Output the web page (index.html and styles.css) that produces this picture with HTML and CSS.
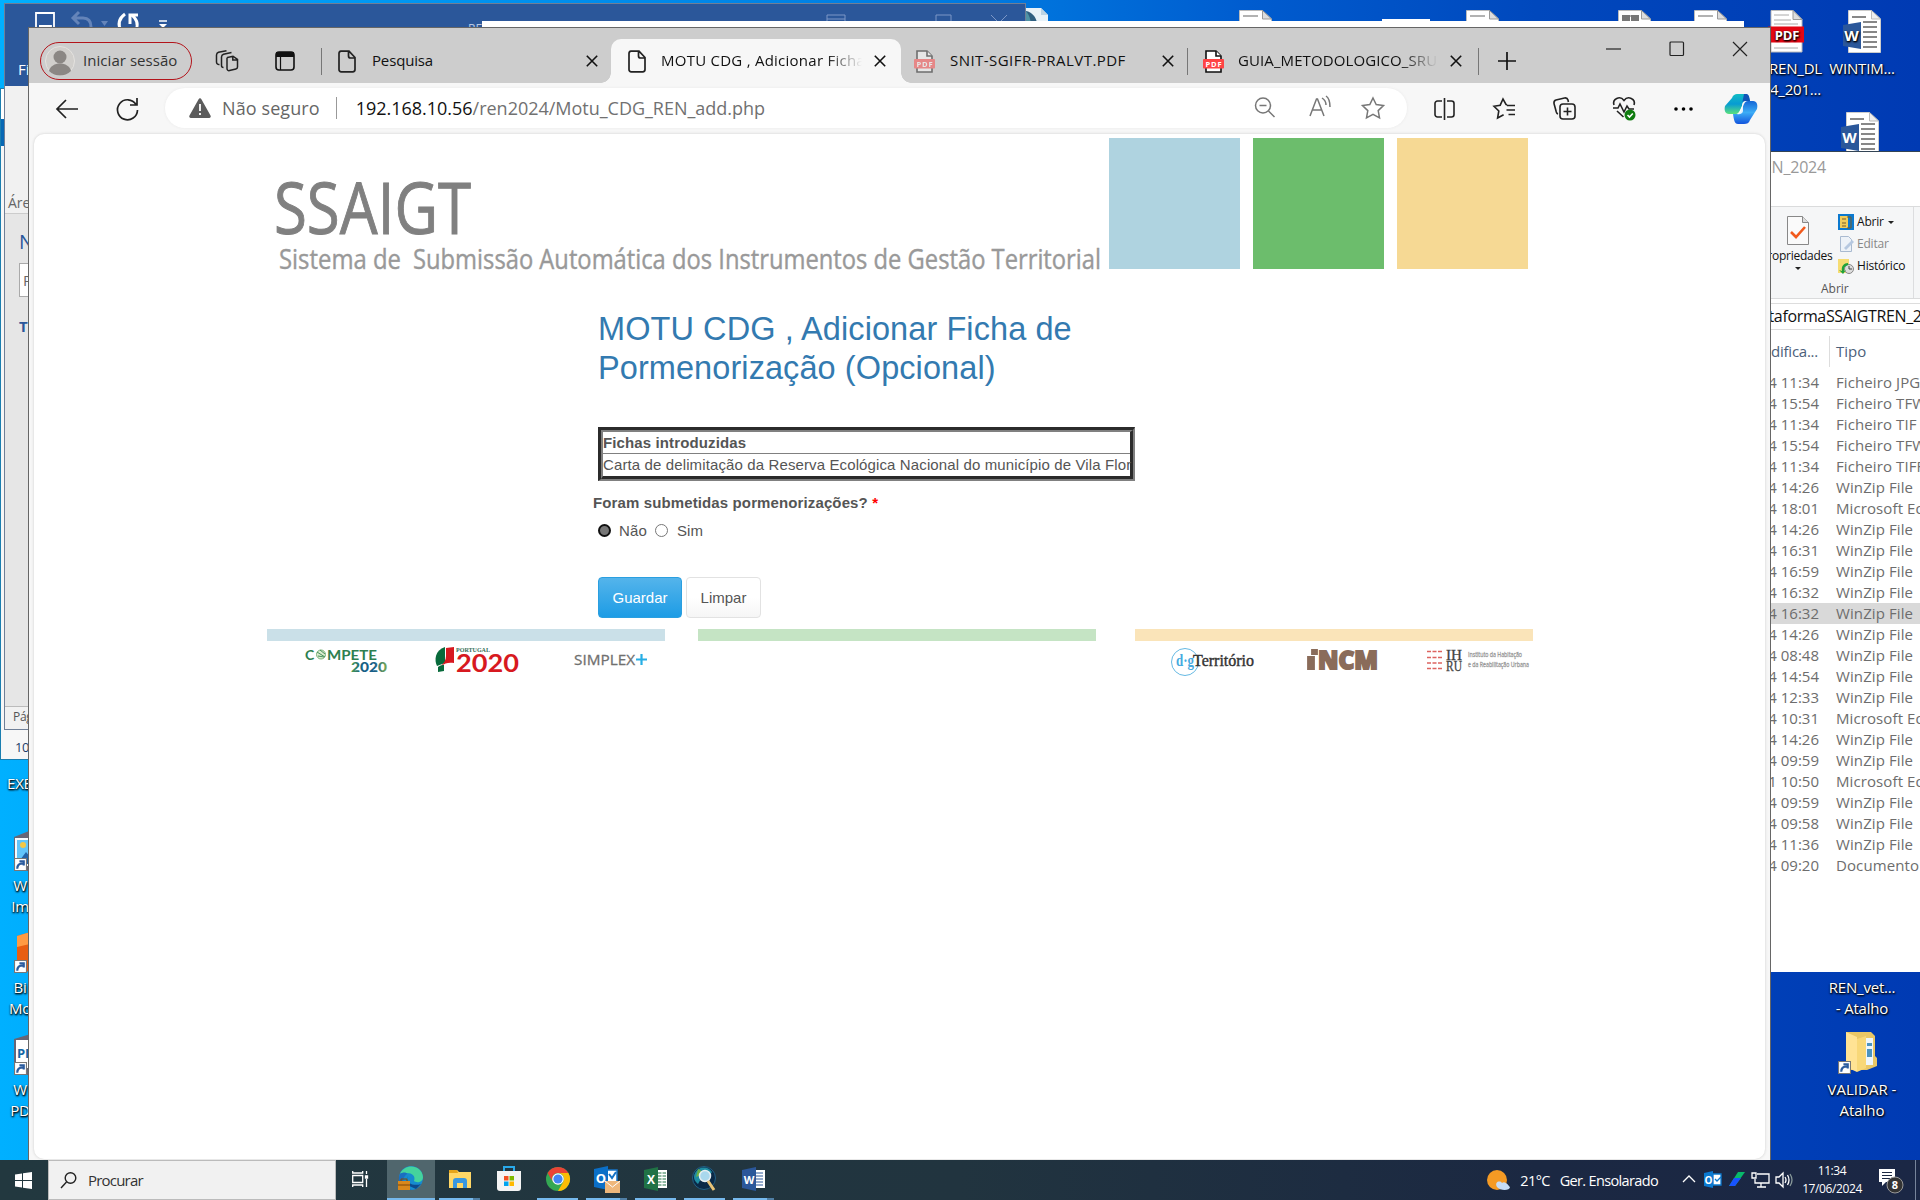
FILE: index.html
```html
<!DOCTYPE html>
<html lang="pt">
<head>
<meta charset="utf-8">
<title>MOTU CDG , Adicionar Ficha de Pormenorização (Opcional)</title>
<link rel="stylesheet" href="styles.css">
</head>
<body>
<svg class="defs" width="0" height="0">
  <defs>
    <symbol id="page" viewBox="0 0 18 23"><path d="M3 1.200h8l6 6.300V19.500a2.300 2.300 0 0 1-2.300 2.300H3.200A2.200 2.200 0 0 1 1 19.500V3.500A2.300 2.300 0 0 1 3 1.200zM10.500 1.500v4.500a2 2 0 0 0 2 2H17" fill="none" stroke="#222" stroke-width="1.700"/></symbol>
    <symbol id="cross" viewBox="0 0 12 12"><path d="M.8.8l10.400 10.400M11.200.8L.8 11.200" stroke="#111" stroke-width="1.600" fill="none"/></symbol>
    <symbol id="pdf" viewBox="0 0 21 23"><path d="M3 1h10l5 5v16H3z" fill="#fff" stroke="#111" stroke-width="1.600"/><path d="M13 1v5h5" fill="#fff" stroke="#111" stroke-width="1.600"/><rect y="9" width="21" height="9.500" rx="1" fill="#f44"/><text x="10.500" y="16.500" font-size="7.500" font-weight="700" text-anchor="middle" textLength="16" fill="#fff">PDF</text></symbol>
    <symbol id="doc" viewBox="0 0 33 43"><path d="M.5.500h23L32.500 9v33.500H.5z" fill="#fff" stroke="#bbb"/><path d="M23.500.500V9h9z" fill="#ddd" stroke="#999"/><path d="M4 6h15M4 12h18" stroke="#999" stroke-width="1.500"/></symbol>
    <symbol id="word" viewBox="0 0 38 43"><path d="M5.500.500h23L37.500 9v33.500h-32z" fill="#fff" stroke="#ccc"/><path d="M28.500.500V9h9z" fill="#eee" stroke="#bbb"/><path d="M9 7h14M20 12h14M20 17h14M20 22h14M20 27h14M20 32h14M20 37h14" stroke="#888" stroke-width="1.800"/><path d="M0 15l18-3v27L0 36z" fill="#2b579a"/><text x="8.500" y="31" font-size="15" font-weight="700" text-anchor="middle" fill="#fff">W</text></symbol>
    <symbol id="arrow" viewBox="0 0 12 12"><path d="M.5.500h11v11H.5z" fill="#fff" stroke="#777"/><path d="M3 10c0-4 2-5 5-5M5 3h4v4" stroke="#2b5c9f" stroke-width="2" fill="none"/></symbol>
  </defs>
</svg>

<main class="desktop">
  <svg class="pin globe" width="25" height="22" viewBox="0 0 25 22"><path d="M0 1h17l7 7v14H0z" fill="#e8f2f8"/><path d="M2 4c6 1 10 6 11 12v6H2z" fill="#2f5f80"/><path d="M2 4v18h4c2-6 0-13-4-18z" fill="#4f93a5"/><path d="M17 1v7h7z" fill="#bcd4e4"/></svg>
  <svg class="pin d1" width="33" height="43"><use href="#doc"/></svg>
  <i class="pin sliver"></i>
  <svg class="pin d2" width="33" height="43"><use href="#doc"/></svg>
  <svg class="pin d3" width="33" height="43"><use href="#doc"/><path d="M4 5h8v8H4zM13 5h8v8h-8z" fill="#777"/></svg>
  <svg class="pin d4" width="33" height="43"><use href="#doc"/></svg>

  <div class="pin shortcut ren-dl">
    <svg width="38" height="45" viewBox="0 0 38 45"><path d="M3 .5h22l9 9V42H3z" fill="#fff" stroke="#bbb"/><path d="M25 .5V9.500h9z" fill="#ddd" stroke="#999"/><path d="M6 5h15M6 10h17M6 14h24M6 38h24" stroke="#aaa"/><rect y="16.500" width="36" height="16" fill="#e30613"/><text x="19" y="29.500" font-size="13" font-weight="700" text-anchor="middle" fill="#fff">PDF</text></svg>
    <span>REN_DL<br>4_201...</span>
  </div>
  <div class="pin shortcut wintim"><svg width="38" height="43"><use href="#word"/></svg><span>WINTIM...</span></div>
  <svg class="pin word2" width="38" height="43"><use href="#word"/></svg>
  <div class="pin shortcut vet"><span>REN_vet...<br>- Atalho</span></div>
  <div class="pin shortcut validar">
    <svg width="40" height="44" viewBox="0 0 40 44"><path d="M8 1h25l4 4v20l2 2v8l-10 4H8z" fill="#e9c766"/><path d="M28 7h7v27h-7z" fill="#eef6fb"/><path d="M29 12h5v3h-5zM29 18h5v8h-5z" fill="#4b94bf"/><path d="M8 1l11 5v35L8 36z" fill="#ffe394"/><path d="M19 8l9-3v32l-9 4z" fill="#f8d878"/><use href="#arrow" x="0" y="30" width="13" height="13"/></svg>
    <span>VALIDAR -<br>Atalho</span>
  </div>

  <div class="pin shortcut left-a"><svg width="40" height="42" viewBox="0 0 40 42"><path d="M0 8L20 0l20 8v34H0z" fill="#667"/><path d="M1 9h40v28H1z" fill="#f6fbff"/><path d="M3 11h40v24H3z" fill="#62c5fa"/><circle cx="9" cy="16" r="3" fill="#f5c745"/><path d="M3 35l9-12 5 6 8-11v17z" fill="#2464a9"/><use href="#arrow" y="29" width="13" height="13"/></svg><span>W<br>Im</span></div>
  <div class="pin shortcut left-b"><svg width="40" height="42" viewBox="0 0 40 42"><path d="M3 5L20 0v42L3 38z" fill="#e75e12"/><path d="M3 5l17-5v12L3 16z" fill="#ff9b43"/><use href="#arrow" y="29" width="13" height="13"/></svg><span>Bi<br>Mo</span></div>
  <div class="pin shortcut left-c"><svg width="40" height="42" viewBox="0 0 40 42"><path d="M0 6L20 0v42H0z" fill="#667"/><path d="M2 7h38v28H2z" fill="#fff"/><text class="flat" x="3" y="25" font-size="13" font-weight="700" fill="#1566a5">PDF</text><use href="#arrow" y="29" width="13" height="13"/></svg><span>W<br>PD</span></div>
  <div class="pin shortcut left-e"><span>EXE</span></div>

  <section class="back-window"><span>105</span></section>

  <section class="office">
    <header class="office-title">
      <svg width="1018" height="24" viewBox="0 0 1018 24" fill="none">
        <path d="M31 9h18v17H31zM34 22h12v5" stroke="#fff" stroke-width="1.800"/>
        <path d="M74 8l-6 6 6 6M69 14h9c7 0 8 5 8 9" stroke="#6484b9" stroke-width="3"/><path d="M96 17h7l-3.500 5z" fill="#6484b9"/>
        <path d="M120 10c-7 5-7 11-4 17M131 26c3-7 0-11-4-15M125 20v-9h8" stroke="#fff" stroke-width="3"/>
        <path d="M154 17h8" stroke="#fff" stroke-width="1.500"/><path d="M154 20h8l-4 4z" fill="#fff"/>
        <path d="M822 11h18v12h-18zM822 15h18M931 11h15v14h-15M986 11l8 8 8-8M931 11v14" stroke="#7c97c6"/>
        <text x="463" y="29" font-size="12" fill="#b9c8e2">RE</text>
      </svg>
    </header>
    <div class="office-menu">Ficheiro</div>
    <div class="office-ribbon">Área</div>
    <div class="office-pane"><b class="nav">Nave</b><span class="find">Proc</span><b class="nav-tab">Títulos</b></div>
    <footer class="office-status">Página</footer>
  </section>

  <i class="pin white-window"></i>

  <section class="explorer">
    <div class="ex-title"><span>REN_2024</span></div>
    <div class="ex-ribbon">
      <div class="ex-props">
        <svg width="22" height="29" viewBox="0 0 22 29"><path d="M.5.500h15l6 6v22H.5z" fill="#fafafa" stroke="#888"/><path d="M15.500.500v6h6" fill="#ddd" stroke="#888"/><path d="M4 16l5 5 9-10" stroke="#f25a1d" stroke-width="2.600" fill="none"/></svg>
        <span>Propriedades</span><i class="caret"></i>
      </div>
      <div class="ex-actions">
        <div><svg width="16" height="16" viewBox="0 0 16 16"><path d="M0 0h16v16H0z" fill="#0b79cf"/><path d="M2 2h8v12H2z" fill="#f2cc59"/><path d="M4 5h4M4 9h4M4 12h4M9 3h4v11H9" stroke="#775c2b" fill="none"/></svg>Abrir<i class="caret"></i></div>
        <div class="dim"><svg width="16" height="16" viewBox="0 0 16 16"><path d="M2.500.500h8l3 3v12h-11z" fill="#edf2f8" stroke="#a9bad0"/><path d="M6 12l8-8 2 2-8 8z" fill="#b6c8e0"/></svg>Editar</div>
        <div><svg width="16" height="16" viewBox="0 0 16 16"><path d="M0 1h11v14H0z" fill="#f6dc72"/><circle cx="11" cy="11" r="4.500" fill="#ddd" stroke="#888"/><path d="M11 8v3h3" stroke="#444" fill="none"/><path d="M10 5c-4 0-7 3-6 8l-3-1 4 4 3-4-2 1c0-4 1-5 4-6z" fill="#21a339"/></svg>Histórico</div>
      </div>
      <div class="ex-group">Abrir</div>
    </div>
    <div class="ex-address"><span>PlataformaSSAIGTREN_2024</span></div>
    <div class="ex-head"><span class="when">Data de modifica...</span><span class="kind">Tipo</span></div>
    <div class="ex-rows">
      <div><span>4 11:34</span><span>Ficheiro JPG</span></div>
      <div><span>4 15:54</span><span>Ficheiro TFW</span></div>
      <div><span>4 11:34</span><span>Ficheiro TIF</span></div>
      <div><span>4 15:54</span><span>Ficheiro TFW</span></div>
      <div><span>4 11:34</span><span>Ficheiro TIFF</span></div>
      <div><span>4 14:26</span><span>WinZip File</span></div>
      <div><span>4 18:01</span><span>Microsoft Edge</span></div>
      <div><span>4 14:26</span><span>WinZip File</span></div>
      <div><span>4 16:31</span><span>WinZip File</span></div>
      <div><span>4 16:59</span><span>WinZip File</span></div>
      <div><span>4 16:32</span><span>WinZip File</span></div>
      <div class="picked"><span>4 16:32</span><span>WinZip File</span></div>
      <div><span>4 14:26</span><span>WinZip File</span></div>
      <div><span>4 08:48</span><span>WinZip File</span></div>
      <div><span>4 14:54</span><span>WinZip File</span></div>
      <div><span>4 12:33</span><span>WinZip File</span></div>
      <div><span>4 10:31</span><span>Microsoft Edge</span></div>
      <div><span>4 14:26</span><span>WinZip File</span></div>
      <div><span>4 09:59</span><span>WinZip File</span></div>
      <div><span>1 10:50</span><span>Microsoft Edge</span></div>
      <div><span>4 09:59</span><span>WinZip File</span></div>
      <div><span>4 09:58</span><span>WinZip File</span></div>
      <div><span>4 11:36</span><span>WinZip File</span></div>
      <div><span>4 09:20</span><span>Documento</span></div>
    </div>
  </section>

  <section class="browser">
    <header class="tabstrip">
      <div class="account"><svg width="30" height="30" viewBox="0 0 30 30"><circle cx="15" cy="15" r="14.500" fill="#d1cfcc" stroke="#e4e2df"/><circle cx="15" cy="11" r="6.500" fill="#8b8784"/><path d="M4 25c2-10 20-10 22 0-6 6-16 6-22 0z" fill="#8b8784"/></svg><span>Iniciar sessão</span></div>
      <svg class="workspaces" width="24" height="22" viewBox="0 0 24 22" fill="none" stroke="#222" stroke-width="1.500"><path d="M12.500 7.500l5.500-1.300 4.500 3.300v7.500a2 2 0 0 1-1.600 2l-6.400 1.600a2 2 0 0 1-2.500-2V9.500a2 2 0 0 1 .5-2zM17.800 6.500V10h4.500M8.500 17.500a2 2 0 0 1-2-2V7a3 3 0 0 1 2-2.700L16.500 2.500M4.500 14.500a2.500 2.500 0 0 1-3-2.500V5a3 3 0 0 1 2-2.700L11.500.800"/></svg>
      <svg class="vertical" width="20" height="20" viewBox="0 0 20 20" fill="none" stroke="#111"><rect x="1" y="1" width="18" height="18" rx="3" stroke-width="1.600"/><path d="M1 3.500h18" stroke-width="5"/><path d="M5.500 5v14" stroke-width="1.200"/></svg>
      <i class="rule r1"></i>
      <div class="tab t1"><svg width="18" height="23"><use href="#page"/></svg><span>Pesquisa</span><svg class="x" width="12" height="12"><use href="#cross"/></svg></div>
      <div class="tab t2"><svg width="18" height="23"><use href="#page"/></svg><span>MOTU CDG , Adicionar Ficha de</span><svg class="x" width="12" height="12"><use href="#cross"/></svg></div>
      <div class="tab t3"><svg class="faded" width="21" height="23"><use href="#pdf"/></svg><span>SNIT-SGIFR-PRALVT.PDF</span><svg class="x" width="12" height="12"><use href="#cross"/></svg></div>
      <i class="rule"></i>
      <div class="tab t4"><svg width="21" height="23"><use href="#pdf"/></svg><span>GUIA_METODOLOGICO_SRUP</span><svg class="x" width="12" height="12"><use href="#cross"/></svg></div>
      <i class="rule"></i>
      <svg class="plus" width="18" height="18" viewBox="0 0 18 18" stroke="#111" stroke-width="1.700"><path d="M9 0v18M0 9h18"/></svg>
      <svg class="controls" width="142" height="16" viewBox="0 0 142 16" fill="none" stroke="#222" stroke-width="1.200"><path d="M0 8h15"/><rect x="64" y="1" width="13.500" height="13.500" rx="1"/><path d="M127 1l14 14M141 1l-14 14"/></svg>
    </header>
    <nav class="toolbar">
      <svg class="back" width="22" height="20" viewBox="0 0 22 20" fill="none" stroke="#222" stroke-width="1.700"><path d="M22 10H1M10 1L1 10l9 9"/></svg>
      <svg class="reload" width="23" height="23" viewBox="0 0 23 23" fill="none" stroke="#222" stroke-width="1.700"><path d="M20 7.500A10 10 0 1 0 21.500 13M21 1v7h-7"/></svg>
      <div class="omnibox">
        <svg width="22" height="20" viewBox="0 0 22 20"><path d="M9.600 1.200a1.600 1.600 0 0 1 2.800 0L21.500 17.500A1.600 1.600 0 0 1 20 20H2A1.600 1.600 0 0 1 .5 17.500z" fill="#5c5c5c"/><path d="M11 6v7M11 15v2" stroke="#fff" stroke-width="1.800"/></svg>
        <span class="warn">Não seguro</span><i></i>
        <span class="url"><b>192.168.10.56</b>/ren2024/Motu_CDG_REN_add.php</span>
        <svg class="omni-icons" width="132" height="24" viewBox="0 0 132 24" fill="none" stroke="#777" stroke-width="1.500"><circle cx="9" cy="9.500" r="7.500"/><path d="M5.500 9.500h7M14.500 15l6 6"/><path d="M56 20l6.500-17h1L70 20M58 14h10M68 2c3 2 4 4 4 7M72 0c3 2 4 6 4 11"/><path d="M119 2l3.200 6.600 7.300 1-5.300 5 1.300 7.300-6.500-3.500-6.500 3.500 1.300-7.300-5.300-5 7.300-1z"/></svg>
      </div>
      <svg class="split" width="21" height="22" viewBox="0 0 21 22" fill="none" stroke="#222" stroke-width="1.600"><path d="M8 3H3.500A2.500 2.500 0 0 0 1 5.500v11A2.500 2.500 0 0 0 3.500 19H8M13 3h4.500A2.500 2.500 0 0 1 20 5.500v11a2.500 2.500 0 0 1-2.500 2.500H13M10.500 0v22"/></svg>
      <svg class="favs" width="23" height="22" viewBox="0 0 23 22" fill="none" stroke="#222" stroke-width="1.600"><path d="M14 7l-1-.5L10 1 7.200 7.200 1 8.200l4.800 4.800L4.600 20l6-3.300M14 7.500h8M13.500 12h8.500M15.500 16.500H22"/></svg>
      <svg class="coll" width="23" height="23" viewBox="0 0 23 23" fill="none" stroke="#222" stroke-width="1.600"><rect x="7" y="7" width="15" height="15" rx="3"/><path d="M14.500 10.500v8M10.500 14.500h8M5 17c-1-.3-1.400-1-1.700-2L1 6.500C.7 4.500 1.200 3.500 3 3l8.500-2c2-.4 3 .3 3.500 2l.4 2"/></svg>
      <svg class="heart" width="24" height="25" viewBox="0 0 24 25" fill="none" stroke="#222" stroke-width="1.600"><path d="M2 9C0 3 8-1 12 4.500 16-1 24 3 22 9M5 15l6.500 6M1 12h5l2-4 4 8 3-6 2 3h5"/><circle cx="18" cy="19" r="5.500" fill="#107c10" stroke="none"/><path d="M15.500 19l2 2 3.300-3.500" stroke="#fff"/></svg>
      <svg class="dots" width="19" height="4" viewBox="0 0 19 4"><circle cx="2" cy="2" r="1.800"/><circle cx="9.500" cy="2" r="1.800"/><circle cx="17" cy="2" r="1.800"/></svg>
      <svg class="copilot" width="34" height="30" viewBox="0 0 34 30"><defs><linearGradient id="ca" x2="0" y2="1"><stop stop-color="#12bdc4"/><stop offset=".5" stop-color="#079bd3"/><stop offset="1" stop-color="#5be17d"/></linearGradient><linearGradient id="cb" x2="0" y2="1"><stop stop-color="#1466d6"/><stop offset=".5" stop-color="#3dadf6"/><stop offset="1" stop-color="#1254dd"/></linearGradient></defs><path d="M8 4c1-3 3-4 5-4h8c3 0 4 2 5 7h-4c-3 0-4 2-4 5l-2 5c-1 2-2 3-4 3H5c-4 0-5-4-4-8z" fill="url(#ca)"/><path d="M20 0h2c3 0 3 2 4 7h-5c-2 0-3 1-3 3z" fill="#1255b7"/><path d="M26 26c-1 3-3 4-6 4h-6c-3 0-4-3-5-10h4c2 0 3-1 4-3l3-7c1-2 2-3 4-3h5c4 0 5 4 4 8z" fill="url(#cb)"/><path d="M15.500 17l3.500-7v7c0 2-3 4-6 3q1.500-1 2.500-3z" fill="#fff" opacity=".85"/></svg>
    </nav>

    <article class="page">
      <header class="banner">
        <svg class="brand" width="842" height="140" viewBox="0 0 842 140"><text x="7" y="99.500" font-size="72" textLength="197" lengthAdjust="spacingAndGlyphs" fill="#808080" stroke="#808080">SSAIGT</text><g fill="#999" stroke="#999" stroke-width=".4"><text x="12" y="135" font-size="27" textLength="122" lengthAdjust="spacingAndGlyphs">Sistema de</text><text x="146" y="135" font-size="27" textLength="688" lengthAdjust="spacingAndGlyphs">Submissão Automática dos Instrumentos de Gestão Territorial</text></g></svg>
        <i class="sq blue"></i><i class="sq green"></i><i class="sq yellow"></i>
      </header>
      <div class="form">
        <h1>MOTU CDG , Adicionar Ficha de Pormenorização (Opcional)</h1>
        <div class="sheet"><div class="sheet-in"><b>Fichas introduzidas</b><span>Carta de delimitação da Reserva Ecológica Nacional do município de Vila Flor</span></div></div>
        <div class="question">Foram submetidas pormenorizações? <em>*</em></div>
        <div class="choices"><i class="radio on"></i><span>Não</span><i class="radio"></i><span>Sim</span></div>
        <div class="buttons"><button class="primary">Guardar</button><button>Limpar</button></div>
      </div>
      <div class="bars"><i class="b1"></i><i class="b2"></i><i class="b3"></i></div>
      <footer class="partners">
        <svg width="1266" height="36" viewBox="0 0 1266 36">
          <g font-family="Lato" font-weight="700">
            <text x="38" y="18.500" font-size="14" fill="#2e8050" textLength="10">C</text><circle cx="54" cy="13.500" r="4.500" fill="#dceccf" stroke="#7eb27a"/><path d="M50 11l8 5M51 15l6 1M53 9l5 4" stroke="#46915c"/><text x="60" y="18.500" font-size="14" fill="#2e8050" textLength="50" lengthAdjust="spacingAndGlyphs">MPETE</text>
            <text x="84" y="31" font-size="14" font-weight="900" textLength="36" lengthAdjust="spacingAndGlyphs" fill="url(#yr)">2020</text>
          </g>
          <defs><linearGradient id="yr"><stop stop-color="#4c9c50"/><stop offset=".3" stop-color="#175f83"/><stop offset=".65" stop-color="#185e8a"/><stop offset="1" stop-color="#7aab50"/></linearGradient></defs>
          <path d="M178 6c-10 3-11 13-8 19l8-3z" fill="#086a3b"/><path d="M179 7l8-1v16c-5-1-9 0-13 3 3-3 5-6 5-10z" fill="#d71920"/><path d="M171 26c3-2 4-2 6-2v6l-6 1z" fill="#086a3b"/>
          <text x="189" y="10.500" font-family="Liberation Serif" font-weight="700" font-size="7" fill="#356e58" textLength="34" lengthAdjust="spacingAndGlyphs">PORTUGAL</text>
          <text x="189" y="31" font-family="Lato" font-weight="700" font-size="24" fill="#d71920" textLength="63" lengthAdjust="spacingAndGlyphs">2020</text>
          <text x="307" y="24" font-size="15" fill="#707070" stroke="#707070" stroke-width=".3" textLength="61" lengthAdjust="spacingAndGlyphs">SIMPLEX</text><path d="M369 18.500h11M374.500 13v11" stroke="#27aee5" stroke-width="2.200"/>
          <circle cx="918" cy="21" r="13.500" fill="none" stroke="#65b9e3"/><text x="909" y="25" font-family="Liberation Serif" font-weight="700" font-size="17" fill="#46aae0" textLength="18" lengthAdjust="spacingAndGlyphs">d·g</text><text x="926" y="25" font-family="Liberation Serif" font-size="16" fill="#333" stroke="#333" stroke-width=".4" textLength="61" lengthAdjust="spacingAndGlyphs">Território</text>
          <g fill="#8a6c5a" stroke="#8a6c5a" stroke-width="1.800"><path d="M1041 16h6v12h-6zM1045 9h5v4h-5z"/><text x="1051" y="27.500" font-weight="800" font-family="Open Sans" font-size="25" textLength="60" lengthAdjust="spacingAndGlyphs">NCM</text></g>
          <path d="M1160 10.500h16M1160 16.500h16M1160 22h16M1160 27.500h16" stroke="#dd6460" stroke-width="1.500" stroke-dasharray="4 1.500"/>
          <g font-family="Liberation Serif" font-size="15" fill="#444" stroke="#444" stroke-width=".3"><text x="1179" y="18.500" textLength="16" lengthAdjust="spacingAndGlyphs">IH</text><text x="1179" y="30" textLength="16" lengthAdjust="spacingAndGlyphs">RU</text></g>
          <g font-size="7" fill="#999" stroke="#999" stroke-width=".3"><text x="1201" y="16" textLength="54" lengthAdjust="spacingAndGlyphs">Instituto da Habitação</text><text x="1201" y="25.500" textLength="61" lengthAdjust="spacingAndGlyphs">e da Reabilitação Urbana</text></g>
        </svg>
      </footer>
    </article>
  </section>

  <footer class="taskbar">
    <div class="start"><svg width="17" height="17" viewBox="0 0 17 17" fill="#fff"><path d="M0 2.500l7-1V8H0zM8 1.300L17 0v8H8zM0 9h7v6.500l-7-1zM8 9h9v8l-9-1.300z"/></svg></div>
    <div class="search"><svg width="17" height="17" viewBox="0 0 17 17" fill="none" stroke="#222" stroke-width="1.400"><circle cx="10.500" cy="6" r="5.300"/><path d="M6.500 10L1 16"/></svg><span>Procurar</span></div>
    <div class="app view"><svg width="16" height="16" viewBox="0 0 16 16" fill="none" stroke="#fff" stroke-width="1.300"><path d="M.7 4.500h10v7H.7zM.7 0v2h10V0M.7 16v-2h10v2M14.500 0v3M14.500 8v8"/><path d="M13.500 5h2v2h-2z" fill="#fff"/></svg></div>
    <div class="app on active"><svg width="26" height="26" viewBox="0 0 26 26"><circle cx="13" cy="12" r="12" fill="#168bcf"/><path d="M2 8C6-3 24-2 25 11c0 6-7 6-9 4 2-5-2-8-7-8-4 0-6 0-7 1z" fill="#45d39d"/><path d="M9 8c-6 4-5 13 5 16-12 0-15-10-12-16 2-2 7-2 7 0z" fill="#1b6ec0"/><path d="M10 10c-3 9 8 10 13 8l-5 5-9-4z" fill="#0d4a8d"/><rect y="15" width="12" height="9" fill="#d9881b"/><path d="M3 15v-2h6v2M0 19h12" stroke="#7f4609" fill="none"/></svg></div>
    <div class="app on more"><svg width="22" height="20" viewBox="0 0 22 20"><path d="M0 1h8l2 2h12v16H0z" fill="#ffd766"/><path d="M0 1h8l1 3H0z" fill="#e5a51b"/><path d="M4 19v-7c0-2 1-3 3-3h8c2 0 3 1 3 3v7h-4v-5H8v5z" fill="#3997df"/></svg></div>
    <div class="app"><svg width="24" height="24" viewBox="0 0 24 24"><path d="M7 5V0h10v5" fill="none" stroke="#29a9ea" stroke-width="2"/><path d="M0 4h24v17q0 3-3 3H3q-3 0-3-3z" fill="#f4f4f4"/><path d="M7 9h4.500v4.500H7z" fill="#f25022"/><path d="M12.500 9H17v4.500h-4.500z" fill="#7fba00"/><path d="M7 14.500h4.500V19H7z" fill="#00a4ef"/><path d="M12.500 14.500H17V19h-4.500z" fill="#ffb900"/></svg></div>
    <div class="app on"><svg width="24" height="24" viewBox="0 0 24 24"><circle cx="12" cy="12" r="12" fill="#34a853"/><path d="M1.600 6A12 12 0 0 1 22.400 6H12a6 6 0 0 0-5.200 9z" fill="#ea4335"/><path d="M22.400 6A12 12 0 0 1 12 24l5.200-9A6 6 0 0 0 12 6z" fill="#fbbc05"/><circle cx="12" cy="12" r="5.800" fill="#fff"/><circle cx="12" cy="12" r="4.600" fill="#4285f4"/></svg></div>
    <div class="app on more"><svg width="26" height="26" viewBox="0 0 26 26"><path d="M12 4h11v14H12z" fill="#fff" stroke="#1673c6" stroke-width="1.500"/><path d="M15 8l3 4 4-6" stroke="#1673c6" stroke-width="2" fill="none"/><path d="M0 3l14-3v24L0 21z" fill="#0b6fc7"/><text x="7" y="17" font-size="13" font-weight="700" fill="#fff" text-anchor="middle">O</text><path d="M11 15h15v12H11z" fill="#eeb77b"/><path d="M11 15l7.500 6 7.500-6" stroke="#fff" fill="none"/></svg></div>
    <div class="app on"><svg width="24" height="24" viewBox="0 0 24 24"><path d="M12 3h11v18H12z" fill="#fff"/><path d="M14 6h8M14 9h8M14 12h8M14 15h8M14 18h8" stroke="#217346"/><path d="M18 4v15" stroke="#fff"/><path d="M0 3l14-3v24L0 21z" fill="#207245"/><text x="7" y="16.500" font-size="12" font-weight="700" fill="#fff" text-anchor="middle">X</text></svg></div>
    <div class="app on"><svg width="26" height="26" viewBox="0 0 26 26"><circle cx="12" cy="12" r="11.500" fill="#0a2947" stroke="#245f83"/><path d="M3 7c4-7 13-7 17-1l-4 6-6-1-4 7c-4-3-5-7-3-11z" fill="#1f8da3"/><path d="M6 3c3 1 5 3 3 6l-5 2z" fill="#6aae48"/><circle cx="13" cy="10" r="5.500" fill="#a9d8ed" stroke="#e6eef1" stroke-width="1.500"/><path d="M16 15l6 9" stroke="#e9c376" stroke-width="3"/></svg></div>
    <div class="app on more"><svg width="24" height="24" viewBox="0 0 24 24"><path d="M12 3h11v18H12z" fill="#fff"/><path d="M14 6h7M14 9h7M14 12h7M14 15h7M14 18h7" stroke="#2b579a"/><path d="M0 3l14-3v24L0 21z" fill="#2b579a"/><text x="7" y="16.500" font-size="11" font-weight="700" fill="#fff" text-anchor="middle">W</text></svg></div>
    <div class="weather"><svg width="23" height="21" viewBox="0 0 23 21"><circle cx="10" cy="10" r="10" fill="#f49a24"/><path d="M10 17c-3-5 3-7 5-4 3-3 7 3 8 4 0 4-10 4-13 0z" fill="#c5dcf7"/></svg><span>21°C</span><span class="sky">Ger. Ensolarado</span></div>
    <svg class="tray" width="112" height="20" viewBox="0 0 112 20" fill="none" stroke="#fff" stroke-width="1.300"><path d="M1 12l6-6 6 6"/><path d="M31 4h8v11h-8z" fill="#fff" stroke="#0b79d0"/><path d="M33 9l2 2 4-4" stroke="#0b79d0"/><path d="M22 3l9-2v17l-9-2z" fill="#0b79d0" stroke="none"/><text x="26.500" y="13.500" font-size="10" font-weight="700" text-anchor="middle" fill="#fff" stroke="none">O</text><path d="M56 2h7L53 16h-6z" fill="#08b86b" stroke="none"/><path d="M52 8h7l-6 8h-6z" fill="#1853ff" stroke="none"/><path d="M75 4h12v9H73V9M79 13v4M75 17h9M70 3h4v5h-4z"/><path d="M94 7h3l4-4v14l-4-4h-3zM103 7q2 3 0 6M105.500 5q3 5 0 10"/><path d="M108 4q4 6 0 12" stroke="#899"/></svg>
    <div class="clock"><span>11:34</span><span>17/06/2024</span></div>
    <svg class="notice" width="26" height="26" viewBox="0 0 26 26"><path d="M0 0h16v13H7l-4 4v-4H0z" fill="#fff"/><path d="M3 3.500h10M3 6.500h10M3 9.500h8" stroke="#1b2842"/><circle cx="16" cy="16" r="8" fill="#333" stroke="#999"/><text x="16" y="20" font-size="11" font-weight="700" text-anchor="middle" fill="#fff">8</text></svg>
    <i class="peek"></i>
  </footer>
</main>
</body>
</html>
```
FILE: styles.css
```css
* { box-sizing: border-box; }
body { margin: 0; font: 15px "Open Sans", "Noto Sans", sans-serif; color: #111; overflow: hidden; }
svg { display: block; flex: none; overflow: visible; }
.defs { position: absolute; }
.desktop { position: relative; width: 1920px; height: 1200px; overflow: hidden; background: linear-gradient(90deg, #00b0ff 0, #009cf5 15%, #0078df 52%, #005ccf 65%, #0048bd 80%, #003ab3 100%); }
.pin { position: absolute; }
.globe { left: 1024px; top: 7px; }
.d1 { left: 1239px; top: 10px; }
.d2 { left: 1466px; top: 10px; }
.d3 { left: 1618px; top: 10px; }
.d4 { left: 1694px; top: 10px; }
.sliver { left: 1382px; top: 19px; width: 48px; height: 2px; background: #fff; }
.word2 { left: 1841px; top: 112px; }
.white-window { left: 482px; top: 21px; width: 1262px; height: 10px; background: #fff; }
.shortcut { display: flex; flex-direction: column; align-items: center; text-align: center; color: #fff; font-size: 15px; line-height: 21px; letter-spacing: -.2px; white-space: nowrap; text-shadow: 1px 1px 2px #000, 0 1px 2px #000; }
.flat { text-shadow: none; }
.ren-dl { left: 1749px; top: 10px; width: 93px; }
.ren-dl svg { margin-right: 17px; }
.ren-dl span { margin-top: 3px; }
.wintim { left: 1814px; top: 10px; width: 96px; }
.wintim span { margin-top: 5px; }
.vet { left: 1814px; top: 977px; width: 96px; }
.validar { left: 1814px; top: 1031px; width: 96px; letter-spacing: 0; }
.validar svg { margin-right: 8px; }
.validar span { margin-top: 4px; }
.left-a, .left-b, .left-c, .left-e { left: 8px; width: 40px; align-items: flex-start; }
.left-a svg, .left-b svg, .left-c svg { margin-left: 6px; }
.left-a span, .left-b span, .left-c span { margin-top: 4px; width: 24px; text-align: center; }
.left-a { top: 829px; }
.left-b { top: 931px; }
.left-c { top: 1033px; }
.left-e { top: 773px; left: 7px; }

.back-window { position: absolute; left: 0; top: 88px; width: 900px; height: 672px; border: 1px solid #1a7eb0; background: linear-gradient(#fff 30px, #0768b5 30px, #0768b5 57px, #f7f7f7 57px); }
.back-window span { display: block; padding: 648px 0 0 14px; font-size: 13px; line-height: 20px; letter-spacing: -.5px; color: #1d3c68; }

.office { position: absolute; left: 4px; top: 3px; width: 1022px; height: 727px; display: flex; flex-direction: column; border: 1px solid #6f7f97; background: #e6e6e6; overflow: hidden; }
.office-title { height: 48px; flex: none; background: #2b579a; }
.office-menu { height: 34px; flex: none; padding: 6px 0 0 13px; background: #2b579a; color: #fff; line-height: 22px; }
.office-ribbon { height: 128px; flex: none; padding: 107px 0 0 3px; background: #f1f1f1; border-bottom: 1px solid #ccc; color: #666; font-size: 14px; line-height: 20px; }
.office-pane { flex: 1; display: flex; flex-direction: column; align-items: flex-start; padding: 14px 0 0 14px; color: #2b579a; }
.nav { font-size: 20px; font-weight: 400; line-height: 28px; }
.find { width: 300px; height: 34px; margin-top: 7px; padding-left: 3px; border: 1px solid #aaa; background: #fff; color: #666; line-height: 32px; }
.nav-tab { margin-top: 17px; line-height: 24px; }
.office-status { height: 23px; padding-left: 8px; border-top: 1px solid #bbb; background: #f1f1f1; color: #555; font-size: 12px; line-height: 20px; letter-spacing: -.3px; }

.explorer { position: absolute; left: 1600px; top: 151px; width: 420px; height: 821px; border-top: 1px solid #345; background: #fff; }
.ex-title { height: 54px; padding-left: 150px; color: #999; font-size: 16px; line-height: 31px; letter-spacing: -.2px; }
.ex-title span { display: block; width: 76px; text-align: right; }
.ex-ribbon { height: 93px; display: grid; grid-template-columns: 88px 1fr; grid-template-rows: 68px 22px; padding-left: 150px; background: linear-gradient(90deg, transparent 313px, #dcdddf 313px, #dcdddf 314px, transparent 314px), #f5f6f7; border: solid #dadbdc; border-width: 1px 0; font-size: 12px; }
.ex-props { display: flex; flex-direction: column; align-items: center; width: 95px; padding-top: 9px; line-height: 22px; }
.ex-props span { width: 70px; text-align: center; letter-spacing: -.25px; display: flex; justify-content: flex-end; }
.ex-props .caret { margin: 0; }
.ex-actions { display: flex; flex-direction: column; padding-top: 4px; line-height: 22px; }
.ex-actions div { display: flex; flex: none; align-items: center; gap: 3px; height: 22px; letter-spacing: -.2px; }
.dim { color: #888; }
.caret { border: 3px solid transparent; border-top-color: #222; border-bottom: 0; margin-left: 1px; }
.ex-group { grid-column: 1 / 3; padding-left: 71px; padding-top: 4px; color: #555; line-height: 20px; }
.ex-address { height: 27px; margin-top: 4px; padding-left: 132px; border: solid #ddd; border-width: 1px 0; font-size: 16px; line-height: 25px; white-space: nowrap; letter-spacing: -.35px; }
.ex-address span { display: block; width: 216px; text-align: right; }
.ex-head { display: flex; height: 31px; margin-top: 6px; line-height: 31px; font-size: 15px; color: #4c607a; }
.when { width: 230px; padding-right: 11px; text-align: right; border-right: 1px solid #ddd; letter-spacing: -.25px; }
.kind { padding-left: 6px; letter-spacing: 0; }
.ex-rows { padding-top: 5px; color: #6d6d6d; }
.ex-rows div { display: flex; height: 21px; line-height: 21px; white-space: nowrap; }
.ex-rows span:first-child { width: 219px; margin-right: 17px; text-align: right; }
.ex-rows span:last-child { letter-spacing: .1px; }
.picked { background: #d9d9d9; }

.browser { position: absolute; left: 28px; top: 27px; width: 1743px; height: 1133px; display: flex; flex-direction: column; border: 1px solid #666; border-bottom: 0; background: #f7f7f7; }
.tabstrip { height: 55px; flex: none; display: flex; align-items: center; background: #cdcdcd; }
.tabstrip > * { flex: none; }
.account { display: flex; align-items: center; gap: 8px; width: 152px; height: 38px; margin: 10px 25px 0 11px; padding-left: 4px; border: 1.500px solid #b3141b; border-radius: 19px; color: #333; letter-spacing: .05px; white-space: nowrap; }
.account span { margin-top: -2px; }
.workspaces { margin: 10px 35px 0 -2px; }
.vertical { margin: 11px 0 0 1px; }
.rule { width: 1px; height: 27px; margin-top: 12px; background: #777; }
.r1 { margin-left: 26px; }
.tab { display: flex; align-items: center; height: 44px; margin-top: 11px; }
.tab > span { flex: none; overflow: hidden; white-space: nowrap; letter-spacing: -.15px; margin-top: -2px; }
.tab .x { margin-left: auto; }
.t1 { width: 289px; padding: 0 13px 0 16px; }
.t1 > span { margin-left: 16px; }
.t2 { position: relative; width: 290px; padding: 0 15px 0 17px; background: #f7f7f7; border-radius: 10px 10px 0 0; }
.t2::before, .t2::after { content: ""; position: absolute; bottom: 0; width: 10px; height: 10px; }
.t2::before { left: -10px; background: radial-gradient(circle at 0 0, transparent 9.500px, #f7f7f7 10px); }
.t2::after { right: -10px; background: radial-gradient(circle at 100% 0, transparent 9.500px, #f7f7f7 10px); }
.t2 > span { width: 201px; margin-left: 15px; letter-spacing: .25px; }
.t2 > span, .t4 > span { -webkit-mask: linear-gradient(90deg, #000 82%, transparent); mask: linear-gradient(90deg, #000 82%, transparent); }
.t3 { width: 286px; padding: 0 13px; }
.t3 > span { margin-left: 15px; letter-spacing: .45px; }
.faded { opacity: .5; }
.t4 { width: 290px; padding: 0 16px 0 15px; }
.t4 > span { width: 200px; margin-left: 14px; letter-spacing: .1px; }
.plus { margin: 11px 0 0 19px; }
.controls { margin: 0 22px 13px auto; }
.toolbar { height: 51px; flex: none; display: flex; align-items: center; }
.toolbar > * { flex: none; }
.back { margin-left: 27px; }
.reload { margin: 0 26px 0 38px; }
.omnibox { display: flex; align-items: center; width: 1242px; height: 40px; margin-right: 27px; margin-top: -1px; padding: 0 21px 0 24px; border-radius: 20px; background: #fff; box-shadow: 0 0 3px #e9e9e9; font-size: 18px; }
.warn { margin-left: 11px; color: #666; letter-spacing: .1px; }
.omnibox i { width: 1px; height: 22px; margin: 0 19px 0 16px; background: #999; }
.url { color: #717171; letter-spacing: -.02px; }
.url b { color: #111; font-weight: 400; }
.omni-icons { margin-left: auto; }
.favs { margin-left: 38px; }
.coll { margin-left: 37px; }
.heart { margin-left: 36px; }
.dots { margin-left: 38px; }
.copilot { margin-left: 31px; }

.page { flex: none; width: 1731px; height: 1025px; margin-left: 5px; border-radius: 10px; background: #fff; box-shadow: 0 0 3px #ccc; font-family: "Liberation Sans", Arial, sans-serif; color: #555; }
.banner { display: flex; padding: 4px 0 0 233px; height: 136px; }
.brand { font-family: "Open Sans", sans-serif; margin-top: -4px; }
.sq { width: 131px; height: 131px; margin-right: 13px; }
.blue { background: #afd3e0; }
.green { background: #6cbd6c; }
.yellow { background: #f6d994; }
.form { width: 560px; margin-left: 564px; font-size: 15px; letter-spacing: .12px; }
h1 { margin: 0; padding-top: 40px; font-size: 32.500px; line-height: 39px; font-weight: 400; letter-spacing: .08px; color: #337ab0; }
.sheet { width: 537px; margin-top: 39px; border: solid; border-color: #2b2b2b #808080 #808080 #2b2b2b; border-width: 3px 2px 2px 3px; }
.sheet-in { border: solid; border-color: #808080 #2b2b2b #2b2b2b #808080; border-width: 2px 3px 3px 2px; white-space: nowrap; }
.sheet-in b, .sheet-in span { display: block; height: 22px; line-height: 22px; }
.sheet-in b { border-bottom: 1px solid #808080; }
.question { margin: 12px 0 0 -5px; font-weight: 700; line-height: 20px; }
.question em { color: #f00; font-style: normal; }
.choices { display: flex; align-items: center; height: 20px; margin-top: 7px; }
.radio { width: 13px; height: 13px; border: 1px solid #777; border-radius: 50%; }
.radio.on { border: 2px solid #111; background: #777; }
.choices span { margin: 0 8px 0 8px; }
.choices span:last-child { margin-left: 9px; }
.buttons { display: flex; gap: 4px; margin-top: 37px; }
button { width: 75px; height: 41px; padding: 0; border: 1px solid #e2e2e2; border-radius: 4px; background: linear-gradient(#fff 50%, #f5f5f5); color: #555; font: 15px "Liberation Sans", Arial, sans-serif; }
.primary { width: 84px; border-color: #2a9fe0; background: linear-gradient(#54b4eb, #1d9ce5); color: #fff; }
.bars { display: flex; margin: 11px 0 0 233px; }
.bars i { width: 398px; height: 12px; }
.b1 { background: #cae0e8; }
.b2 { background: #c5e4c4; margin: 0 39px 0 33px; }
.b3 { background: #fae4b9; }
.partners { margin-left: 233px; font-family: "Open Sans", sans-serif; }

.taskbar { position: absolute; left: 0; bottom: 0; width: 1920px; height: 40px; display: flex; align-items: center; background: linear-gradient(90deg, #22383f, #21343f 50%, #1b2842 80%, #1b2745); color: #fff; }
.start { width: 48px; padding-left: 15px; }
.search { display: flex; align-items: center; gap: 11px; width: 288px; height: 40px; padding-left: 11px; border: 1px solid #bbb; background: #f1f1f1; color: #333; letter-spacing: -.8px; }
.app { display: flex; align-items: center; justify-content: center; width: 41px; height: 40px; margin-right: 8px; border-bottom: 2px solid transparent; }
.view { width: 48px; margin-right: 3px; }
.on { border-color: #76b9ed; }
.active { width: 48px; margin-right: 4px; background: #50666d; }
.more { border-image: linear-gradient(90deg, #76b9ed 80%, #507fa5 80%) 2; border-width: 0 0 2px; border-style: solid; }
.weather { display: flex; align-items: center; gap: 10px; margin-left: auto; letter-spacing: -.65px; white-space: nowrap; font-size: 14.500px; }
.tray { margin-left: 24px; }
.clock { display: flex; flex-direction: column; align-items: center; width: 58px; margin-left: 9px; font-size: 12px; line-height: 18px; letter-spacing: -.4px; }
.notice { margin: 4px 10px 0 18px; }
.peek { width: 1px; height: 40px; margin-right: 4px; background: #77849b; }
```
